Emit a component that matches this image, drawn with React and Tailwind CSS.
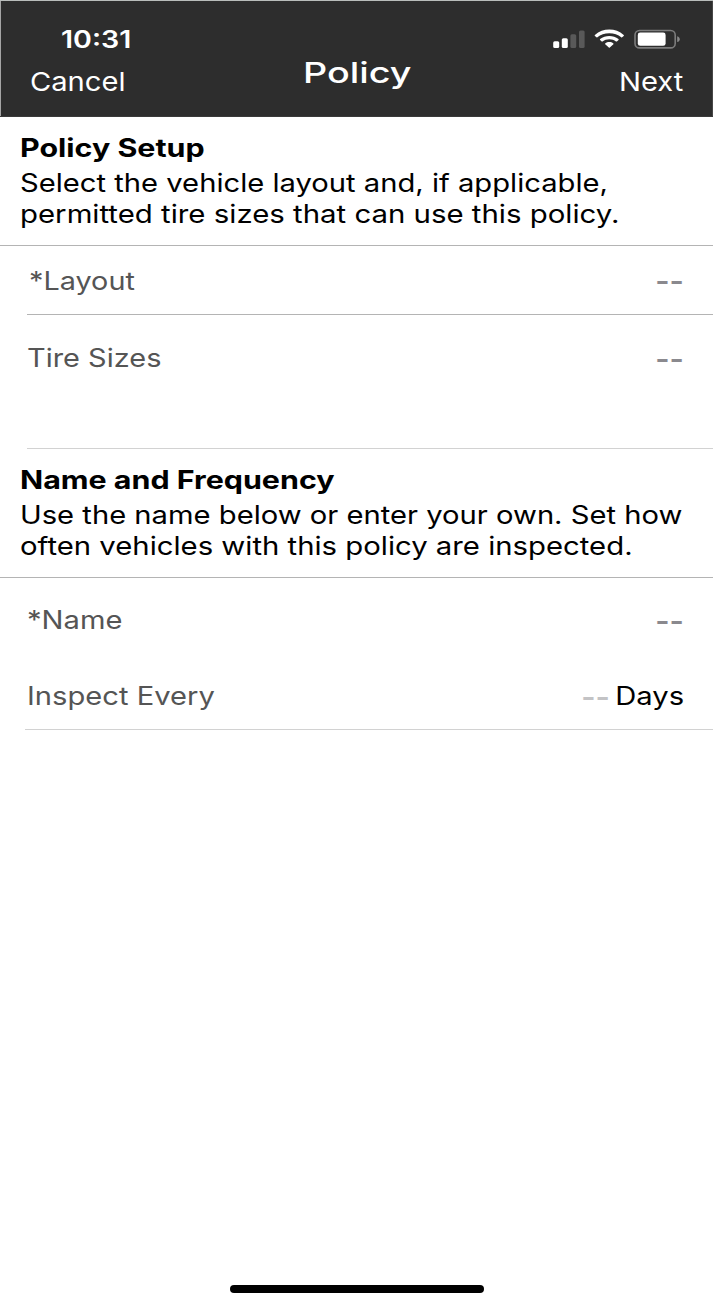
import React from "react";

function StatusIcons() {
  return (
    <svg width="130" height="22" viewBox="0 0 130 22" className="block">
      <g fill="#fff">
        <rect x="3.2" y="13.3" width="6" height="6.8" rx="1.5" />
        <rect x="11.8" y="10.3" width="6" height="9.8" rx="1.5" />
        <rect x="20.4" y="6.2" width="5.8" height="13.9" rx="1.5" fill="#595959" />
        <rect x="29" y="2.4" width="5.6" height="17.7" rx="1.5" fill="#595959" />
      </g>
      <g fill="#fff" transform="translate(0 0.5)">
        <path d="M59.3 4.7C63.9 4.7 68.1 6.2 71.2 8.7C71.5 9 71.9 9 72.1 8.7L73.7 7.4C74 7.1 74 6.7 73.7 6.4C65.7 -0.9 52.9 -0.9 44.9 6.4C44.6 6.7 44.6 7.1 44.9 7.4L46.5 8.7C46.7 9 47.1 9 47.4 8.7C50.5 6.2 54.7 4.7 59.3 4.7Z" />
        <path d="M59.3 10.8C61.9 10.8 64.2 11.6 66 12.9C66.3 13.1 66.7 13.1 66.9 12.9L68.5 11.6C68.8 11.3 68.8 10.9 68.5 10.6C63.3 6.3 55.3 6.3 50.1 10.6C49.8 10.9 49.8 11.3 50.1 11.6L51.7 12.9C51.9 13.1 52.3 13.1 52.6 12.9C54.4 11.6 56.7 10.8 59.3 10.8Z" />
        <path d="M63.4 15.8C63.7 15.5 63.7 15.1 63.4 14.9C61 13 57.6 13 55.2 14.9C54.9 15.1 54.9 15.5 55.2 15.8L58.8 18.9C59.1 19.2 59.5 19.2 59.8 18.9Z" />
      </g>
      <rect x="85" y="2.5" width="40.2" height="17.4" rx="4.5" fill="none" stroke="#7c7c7c" strokeWidth="1.6" />
      <rect x="87.8" y="4.6" width="27.8" height="13.2" rx="2.4" fill="#fff" />
      <path d="M127.2 8.2C130.6 9.1 130.6 13.2 127.2 14.1Z" fill="#8a8a8a" />
    </svg>
  );
}

function Header() {
  return (
    <header className="flex h-[117px] justify-between border-b border-[#3a3a3a] bg-[#2d2d2d] text-white shadow-[inset_0_1px_0_#b9bdbb,inset_1px_0_0_#a5a5a5,inset_-1px_0_0_#474747]">
      <div className="flex w-[200px] flex-col items-start pt-[28px]">
        <span className="ml-[61px] origin-left scale-x-[1.19] text-[24px] leading-[24px] font-semibold">10:31</span>
        <button className="mt-[15px] ml-[30.4px] origin-left scale-x-[1.12] text-[26px] leading-[30px]">Cancel</button>
      </div>
      <div className="flex w-[200px] flex-col items-start pt-[53px]">
        <h1 className="ml-[46.8px] origin-left scale-x-[1.3] text-[29px] leading-[40px] font-medium">Policy</h1>
      </div>
      <div className="flex w-[200px] flex-col items-end pt-[28px]">
        <div className="mr-[33px]">
          <StatusIcons />
        </div>
        <button className="mt-[17px] mr-[29.4px] origin-right scale-x-[1.122] text-[26px] leading-[30px]">Next</button>
      </div>
    </header>
  );
}

function SectionTitle({ children }) {
  return <h2 className="w-fit origin-left text-[25.5px] leading-[33px] font-bold whitespace-nowrap scale-x-[1.192]">{children}</h2>;
}

function TextLine({ scale, children }) {
  return <span className={`block w-fit origin-left whitespace-nowrap ${scale}`}>{children}</span>;
}

function Dashes({ className }) {
  return <span className={`origin-right scale-x-[1.2] font-bold ${className}`}>--</span>;
}

export default function App() {
  return (
    <div className="flex h-[1305px] w-[713px] flex-col bg-white font-['Inter',sans-serif] text-[25.5px] text-black">
      <Header />
      <section>
        <div className="h-[128px] pt-[14px] pl-[20px]">
          <SectionTitle>Policy Setup</SectionTitle>
          <p className="pt-[3px] leading-[31px]">
            <TextLine scale="scale-x-[1.1445]">Select the vehicle layout and, if applicable,</TextLine>
            <TextLine scale="scale-x-[1.152]">permitted tire sizes that can use this policy.</TextLine>
          </p>
        </div>
        <div className="flex h-[69px] items-center justify-between border-t border-[#b4b4b4] pt-[2px] pr-[29px] pl-[29.1px] text-[#555]">
          <span className="origin-left scale-x-[1.13]">*Layout</span>
          <Dashes className="pt-px text-[#8a898e]" />
        </div>
        <div className="ml-[27px] flex h-[134px] items-start justify-between border-t border-[#b4b4b4] pt-[24px] pr-[29px] leading-[37px] text-[#555]">
          <span className="origin-left scale-x-[1.135]">Tire Sizes</span>
          <Dashes className="pt-px text-[#8a898e]" />
        </div>
      </section>
      <section>
        <div className="ml-[27px] h-px bg-[#d2d2d2]" />
        <div className="h-[128px] pt-[14px] pl-[20px]">
          <SectionTitle>Name and Frequency</SectionTitle>
          <p className="pt-[3px] leading-[31px]">
            <TextLine scale="scale-x-[1.1445]">Use the name below or enter your own. Set how</TextLine>
            <TextLine scale="scale-x-[1.149]">often vehicles with this policy are inspected.</TextLine>
          </p>
        </div>
        <div className="flex h-[86px] items-center justify-between border-t border-[#b4b4b4] pr-[29px] pl-[27.3px] text-[#555]">
          <span className="origin-left scale-x-[1.143]">*Name</span>
          <Dashes className="pt-[2px] text-[#8a898e]" />
        </div>
        <div className="flex h-[66px] items-center pr-[28.5px] pl-[26.8px] text-[#555]">
          <span className="flex-none origin-left scale-x-[1.143]">Inspect Every</span>
          <Dashes className="mr-[15px] ml-auto pt-[2px] text-[#c3c3c5]" />
          <span className="origin-right scale-x-[1.145] text-black">Days</span>
        </div>
        <div className="ml-[25px] h-px bg-[#d2d2d2]" />
      </section>
      <div className="mx-auto mt-auto mb-[12px] h-[8px] w-[254px] rounded-full bg-black" />
    </div>
  );
}
